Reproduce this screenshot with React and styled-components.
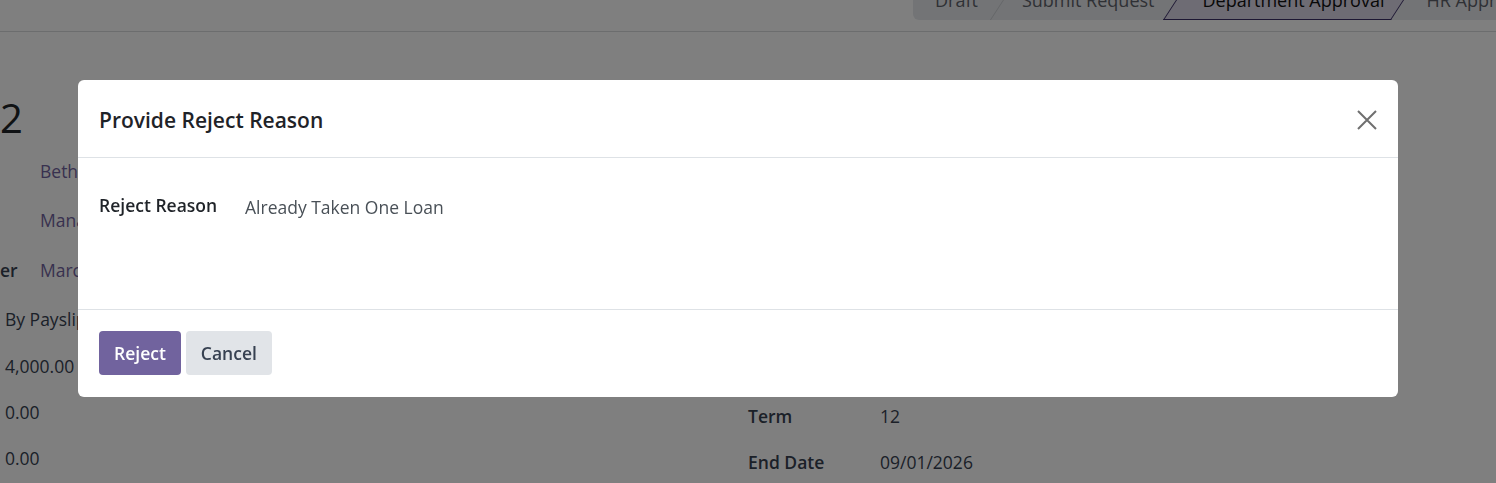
import React from 'react';
import styled, { createGlobalStyle } from 'styled-components';

const GlobalStyle = createGlobalStyle`
  html, body {
    margin: 0;
    padding: 0;
    background: #ffffff;
    font-family: 'Open Sans', 'Noto Sans', sans-serif;
    color: #212529;
    overflow: hidden;
  }
`;

const Page = styled.div`
  width: 1496px;
  height: 483px;
  overflow: hidden;
  background: #fff;
`;

const ControlPanel = styled.div`
  height: 31px;
  border-bottom: 1px solid #d8dadd;
  display: grid;
  grid-template-columns: 913px auto;
  overflow: hidden;
`;

const Breadcrumbs = styled.div``;

const StatusBar = styled.div`
  margin-top: -20px;
  height: 40px;
  display: flex;
  align-items: center;
  background: #e7e9ed;
  border-radius: 0 0 6px 6px;
  width: max-content;
`;

const Stage = styled.div`
  position: relative;
  height: 40px;
  display: flex;
  align-items: center;
  padding: 0 ${(p) => (p.$active ? 20 : 22)}px 0 ${(p) => (p.$active ? 26 : 22)}px;
  font-size: 18px;
  color: ${(p) => (p.$active ? '#111' : '#5f636a')};
  font-weight: ${(p) => (p.$active ? 500 : 400)};
  white-space: nowrap;
  z-index: 0;

  &::before {
    content: '';
    position: absolute;
    top: 0;
    bottom: 0;
    left: 0;
    right: 0;
    transform: skewX(-33deg);
    display: ${(p) => (p.$active ? 'block' : 'none')};
    background: #ddd8e8;
    border: 1px solid #3a2f66;
    border-top: none;
    z-index: -1;
  }

  &::after {
    content: '';
    position: absolute;
    top: 6px;
    bottom: 0;
    right: -2px;
    width: 1px;
    background: #c9ccd1;
    transform: skewX(-33deg);
    display: ${(p) => (p.$active ? 'none' : 'block')};
  }
`;

const Sheet = styled.div`
  display: grid;
  grid-template-columns: 748px 1fr;
`;

const LeftCol = styled.div`
  display: flex;
  flex-direction: column;
`;

const RightCol = styled.div`
  display: flex;
  flex-direction: column;
  padding-top: 361px;
`;

const RecordTitle = styled.div`
  font-size: 40px;
  font-weight: 500;
  line-height: 44px;
  margin: 64px 0 7px;
  height: 44px;
`;

const FieldRow = styled.div`
  display: flex;
  align-items: center;
  height: ${(p) => p.$h || 50}px;
  font-size: 17.5px;
  white-space: nowrap;
`;

const Label = styled.span`
  width: ${(p) => p.$w || 40}px;
  font-weight: 600;
  color: #374151;
`;

const LinkValue = styled.span`
  color: #71639e;
`;

const Value = styled.span`
  color: #374151;
  padding-left: ${(p) => p.$pl || 0}px;
`;

const Backdrop = styled.div`
  position: fixed;
  inset: 0;
  background: rgba(0, 0, 0, 0.5);
  display: flex;
  align-items: flex-start;
  padding: 80px 98px 0 78px;
`;

const Modal = styled.div`
  width: 1320px;
  background: #fff;
  border-radius: 6px;
  display: flex;
  flex-direction: column;
`;

const ModalHeader = styled.div`
  height: 78px;
  box-sizing: border-box;
  display: flex;
  align-items: center;
  justify-content: space-between;
  padding: 2px 21px 0;
  border-bottom: 1px solid #dee2e6;
`;

const ModalTitle = styled.h4`
  margin: 0;
  font-size: 21px;
  font-weight: 600;
  color: #1f2328;
`;

const CloseButton = styled.button`
  border: none;
  background: transparent;
  padding: 0;
  width: 20px;
  height: 20px;
  display: flex;
  align-items: center;
  justify-content: center;
  cursor: pointer;
`;

const ModalBody = styled.div`
  height: 152px;
  box-sizing: border-box;
  padding: 37px 21px 30px;
  border-bottom: 1px solid #dee2e6;
`;

const FormRow = styled.div`
  display: flex;
  align-items: baseline;
`;

const FormLabel = styled.label`
  flex: 0 0 146px;
  font-size: 17.5px;
  font-weight: 600;
  color: #1f2328;
  white-space: nowrap;
  position: relative;
  top: -2px;
`;

const FormValue = styled.span`
  font-size: 17.5px;
  color: #495057;
  white-space: nowrap;
`;

const ModalFooter = styled.div`
  display: flex;
  gap: 5px;
  padding: 21px 21px 22px;
`;

const Button = styled.button`
  height: 44px;
  padding: 0 15px;
  border: none;
  border-radius: 4px;
  font-family: inherit;
  font-size: 17.5px;
  font-weight: 600;
  background: ${(p) => (p.$primary ? '#71639e' : '#e1e4e8')};
  color: ${(p) => (p.$primary ? '#fff' : '#374151')};
  cursor: pointer;
`;

export default function App() {
  return (
    <Page>
      <GlobalStyle />
      <ControlPanel>
        <Breadcrumbs />
        <StatusBar>
          <Stage>Draft</Stage>
          <Stage>Submit Request</Stage>
          <Stage $active>Department Approval</Stage>
          <Stage>HR Approval</Stage>
        </StatusBar>
      </ControlPanel>
      <Sheet>
        <LeftCol>
          <RecordTitle>2</RecordTitle>
          <FieldRow $h={48}>
            <Label />
            <LinkValue>Bethany Jenkins</LinkValue>
          </FieldRow>
          <FieldRow $h={50}>
            <Label />
            <LinkValue>Management</LinkValue>
          </FieldRow>
          <FieldRow $h={50}>
            <Label>er</Label>
            <LinkValue>Marc Demo</LinkValue>
          </FieldRow>
          <FieldRow $h={48}>
            <Value $pl={5}>By Payslip</Value>
          </FieldRow>
          <FieldRow $h={46}>
            <Value $pl={5}>4,000.00</Value>
          </FieldRow>
          <FieldRow $h={46}>
            <Value $pl={5}>0.00</Value>
          </FieldRow>
          <FieldRow $h={46}>
            <Value $pl={5}>0.00</Value>
          </FieldRow>
        </LeftCol>
        <RightCol>
          <FieldRow $h={46}>
            <Label $w={132}>Term</Label>
            <Value>12</Value>
          </FieldRow>
          <FieldRow $h={46}>
            <Label $w={132}>End Date</Label>
            <Value>09/01/2026</Value>
          </FieldRow>
        </RightCol>
      </Sheet>

      <Backdrop>
        <Modal>
          <ModalHeader>
            <ModalTitle>Provide Reject Reason</ModalTitle>
            <CloseButton aria-label="Close">
              <svg width="20" height="20" viewBox="0 0 20 20">
                <path d="M1 1 L19 19 M19 1 L1 19" stroke="#6f6f6f" strokeWidth="2" />
              </svg>
            </CloseButton>
          </ModalHeader>
          <ModalBody>
            <FormRow>
              <FormLabel>Reject Reason</FormLabel>
              <FormValue>Already Taken One Loan</FormValue>
            </FormRow>
          </ModalBody>
          <ModalFooter>
            <Button $primary>Reject</Button>
            <Button>Cancel</Button>
          </ModalFooter>
        </Modal>
      </Backdrop>
    </Page>
  );
}
